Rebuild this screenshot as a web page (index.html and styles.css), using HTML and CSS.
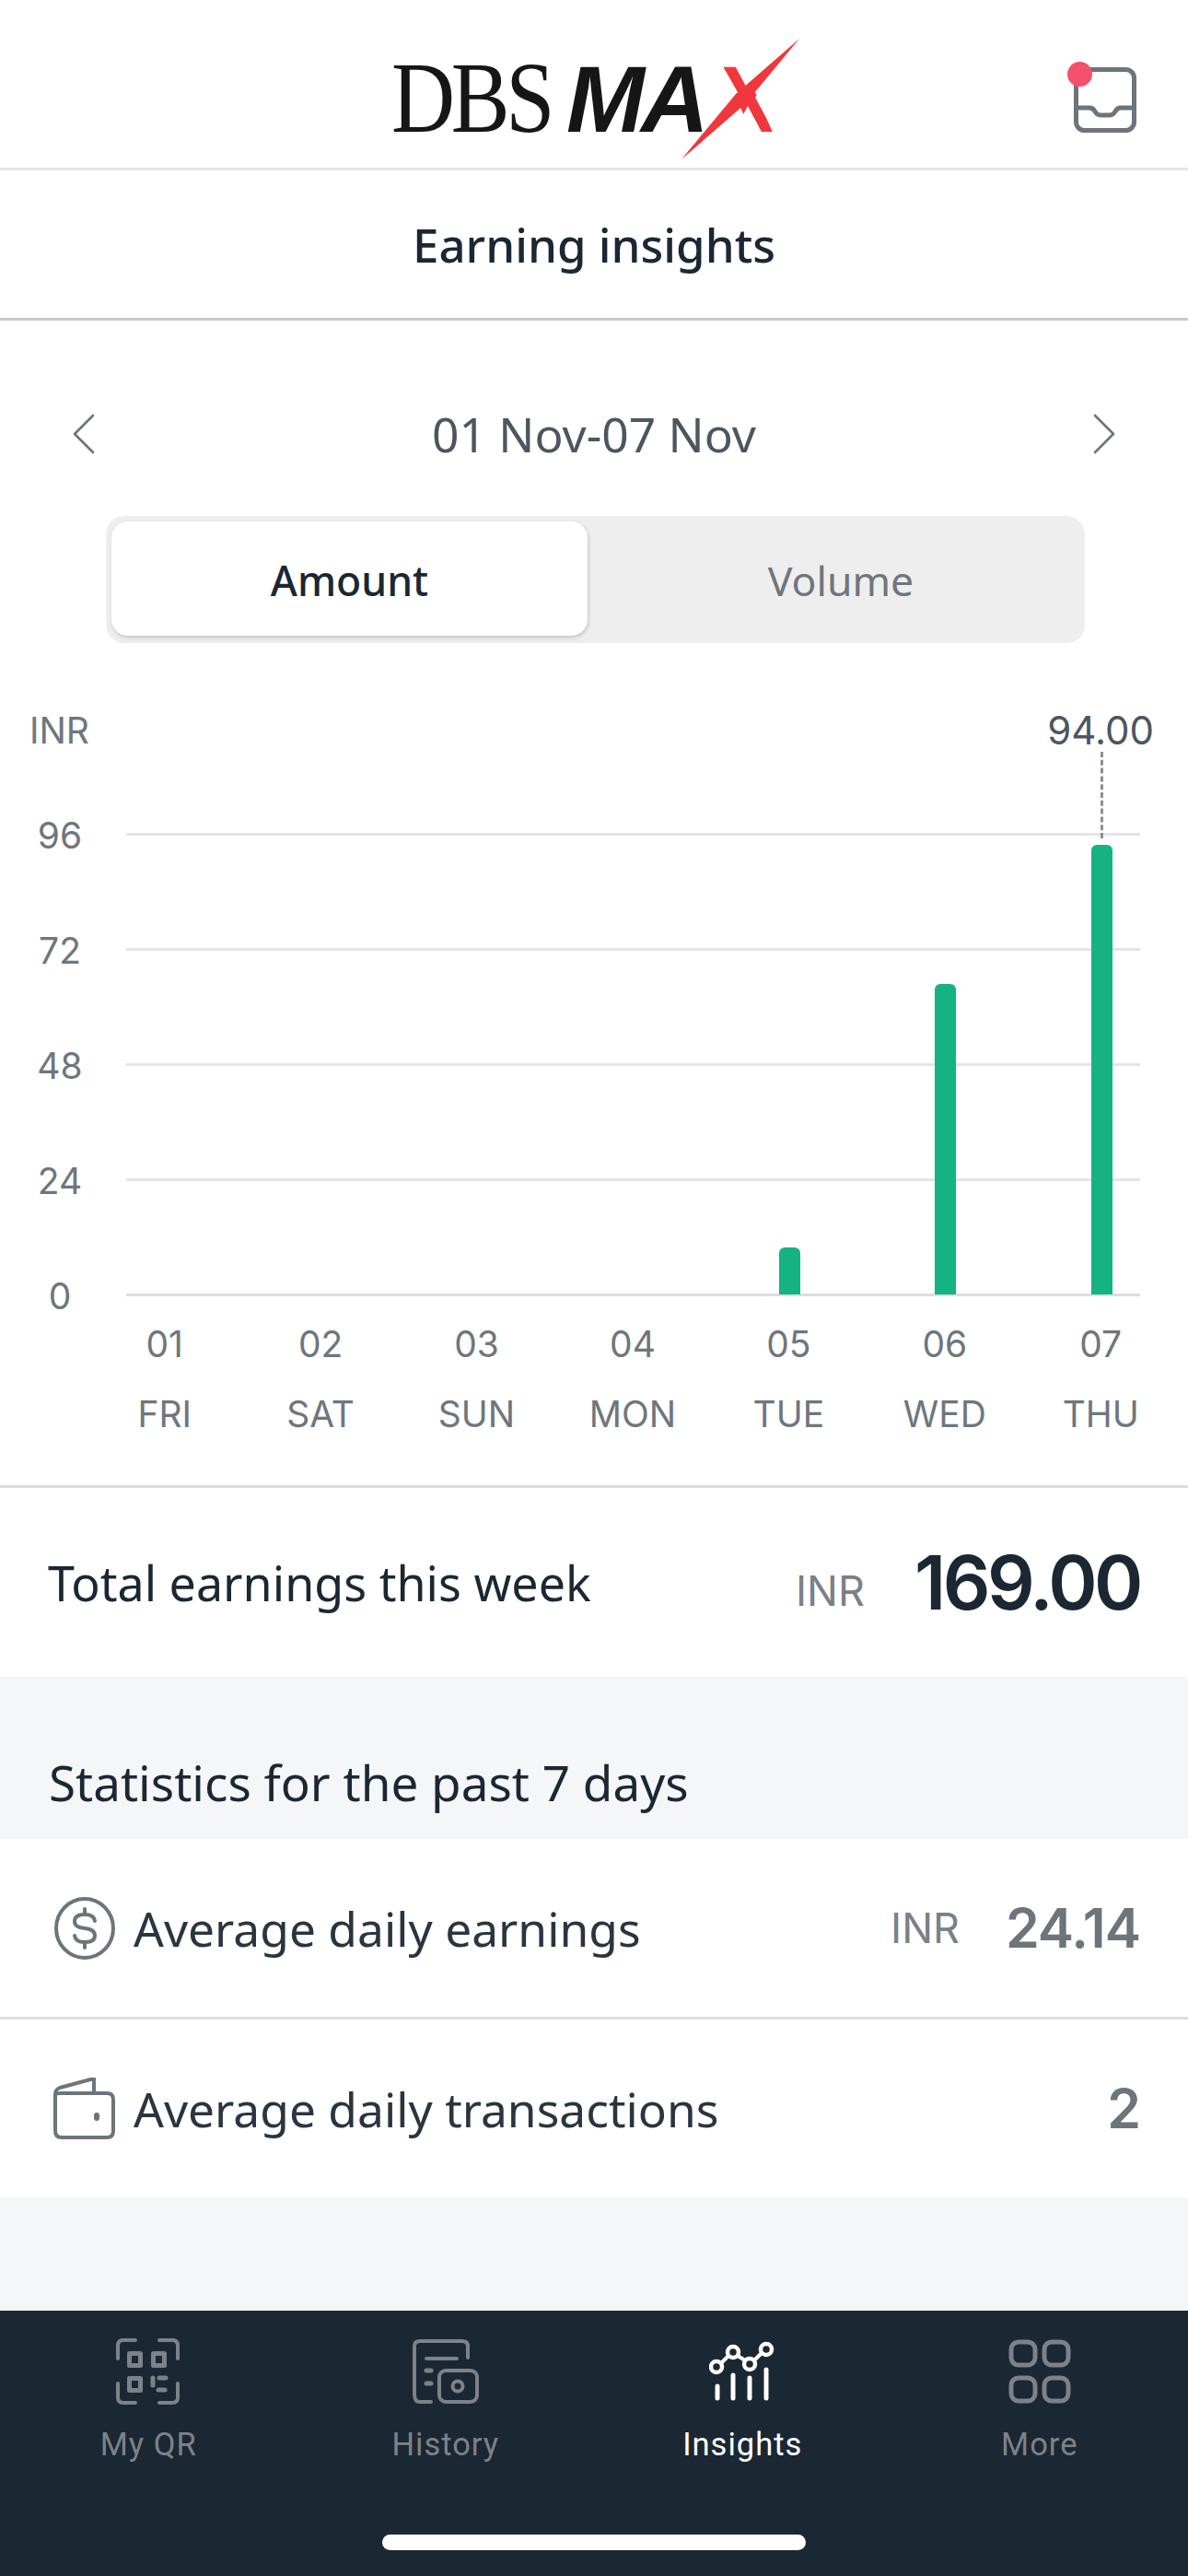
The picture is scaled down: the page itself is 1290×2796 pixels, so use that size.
FILE: index.html
```html
<!DOCTYPE html>
<html lang="en">

<head>
    <meta charset="UTF-8">
    <meta name="viewport" content="width=device-width, initial-scale=1.0">
    <title>Earning insights</title>
    <link rel="stylesheet" href="styles.css">
</head>

<body>
    <div class="app">
        <header class="topbar">
            <div class="logo">
                <span class="logo-dbs">DBS</span><span class="logo-ma">MA</span><span class="logo-x">X</span>
                <svg class="logo-slash" viewBox="0 0 128 131"><path d="M0 131 L59 60 L128 0 L69 71 Z" fill="#f0373c"/></svg>
            </div>
            <div class="inbox">
                <svg width="68" height="72" viewBox="0 0 68 72" fill="none" stroke="#6e747b" stroke-width="5" stroke-linecap="round" stroke-linejoin="round">
                    <rect x="2.500" y="2.500" width="63" height="66" rx="9"/>
                    <path d="M3 44 H17 Q21 44 23 48 Q25 52 29 52 H39 Q43 52 45 48 Q47 44 51 44 H65"/>
                </svg>
                <span class="inbox-dot"></span>
            </div>
        </header>

        <h1 class="page-title">Earning insights</h1>

        <section class="range">
            <svg width="26" height="44" viewBox="0 0 26 44" fill="none" stroke="#6e747b" stroke-width="2.600" stroke-linecap="round" stroke-linejoin="round"><path d="M23 2 L3 22 L23 42"/></svg>
            <span class="range-label">01 Nov-07 Nov</span>
            <svg width="26" height="44" viewBox="0 0 26 44" fill="none" stroke="#6e747b" stroke-width="2.600" stroke-linecap="round" stroke-linejoin="round"><path d="M3 2 L23 22 L3 42"/></svg>
        </section>

        <div class="toggle">
            <div class="toggle-item active">Amount</div>
            <div class="toggle-item">Volume</div>
        </div>

        <section class="chart">
            <div class="chart-head">
                <span>INR</span>
                <span class="peak">94.00</span>
            </div>
            <div class="plot">
                <div class="gridline"><span>96</span></div>
                <div class="gridline"><span>72</span></div>
                <div class="gridline"><span>48</span></div>
                <div class="gridline"><span>24</span></div>
                <div class="gridline last"><span>0</span></div>
                <div class="bars">
                    <div class="col"></div>
                    <div class="col"></div>
                    <div class="col"></div>
                    <div class="col"></div>
                    <div class="col"><div class="bar" style="height: 51px"></div></div>
                    <div class="col"><div class="bar" style="height: 337px"></div></div>
                    <div class="col"><div class="bar" style="height: 488px"></div></div>
                </div>
                <div class="peak-line"></div>
            </div>
            <div class="days">
                <div class="day"><span>01</span><span>FRI</span></div>
                <div class="day"><span>02</span><span>SAT</span></div>
                <div class="day"><span>03</span><span>SUN</span></div>
                <div class="day"><span>04</span><span>MON</span></div>
                <div class="day"><span>05</span><span>TUE</span></div>
                <div class="day"><span>06</span><span>WED</span></div>
                <div class="day"><span>07</span><span>THU</span></div>
            </div>
        </section>

        <section class="total">
            <span class="total-label">Total earnings this week</span>
            <span class="total-cur">INR</span>
            <span class="total-num">169.00</span>
        </section>

        <h2 class="stats-title">Statistics for the past 7 days</h2>

        <div class="stat stat-first">
            <svg class="stat-icon" width="68" height="68" viewBox="0 0 68 68" fill="none" stroke="#6e747b" stroke-width="4" stroke-linecap="round" stroke-linejoin="round">
                <ellipse cx="34" cy="34" rx="31" ry="32"/>
                <path d="M45 26 Q44 19 34 19 Q23 19 23 26.500 Q23 33 34 34 Q45 35 45 42 Q45 49 34 49 Q24 49 23 42"/>
                <path d="M34 13 V19 M34 49 V55"/>
            </svg>
            <span class="stat-label">Average daily earnings</span>
            <span class="stat-cur">INR</span>
            <span class="stat-num">24.14</span>
        </div>
        <div class="stat">
            <svg class="stat-icon" width="68" height="68" viewBox="0 0 68 68" fill="none" stroke="#6e747b" stroke-width="4" stroke-linecap="round" stroke-linejoin="round">
                <path d="M2 18 V58 Q2 65 9 65 H58 Q65 65 65 58 V24 Q65 17 58 17 H9 Q2 17 2 18 Q2 13 7 11 L44 1 V17"/>
                <path d="M47 41 V44" stroke-width="6"/>
            </svg>
            <span class="stat-label">Average daily transactions</span>
            <span class="stat-num">2</span>
        </div>

        <div class="spacer"></div>

        <nav class="tabbar">
            <div class="tabs">
                <div class="tab">
                    <svg width="70" height="72" viewBox="0 0 70 72" fill="none" stroke="currentColor" stroke-width="4" stroke-linecap="round" stroke-linejoin="round">
                        <path d="M2 22 V8 Q2 2 8 2 H21 M47 2 H61 Q67 2 67 8 V22 M2 49 V64 Q2 70 8 70 H21 M67 49 V64 Q67 70 61 70 H47"/>
                        <rect x="14.500" y="16.500" width="12" height="13" stroke-width="5"/>
                        <rect x="40.500" y="16.500" width="12" height="13" stroke-width="5"/>
                        <rect x="14.500" y="43.500" width="12" height="13" stroke-width="5"/>
                        <path d="M40 43 V51 M47 43 H54 M46 56 H53" stroke-width="5"/>
                    </svg>
                    <span>My QR</span>
                </div>
                <div class="tab">
                    <svg width="72" height="70" viewBox="0 0 72 70" fill="none" stroke="currentColor" stroke-width="4" stroke-linecap="round" stroke-linejoin="round">
                        <path d="M60 20 V8 Q60 2 54 2 H8 Q2 2 2 8 V60 Q2 68 8 68 H20"/>
                        <path d="M15 21 H48"/>
                        <path d="M15 34 H20 M15 48 H20" stroke-width="5"/>
                        <rect x="29" y="34" width="41" height="34" rx="7"/>
                        <circle cx="49" cy="51" r="5.500"/>
                    </svg>
                    <span>History</span>
                </div>
                <div class="tab active">
                    <svg width="72" height="66" viewBox="0 0 72 66" fill="none" stroke="currentColor" stroke-width="4" stroke-linecap="round" stroke-linejoin="round">
                        <circle cx="8" cy="28" r="6" stroke-width="4.500"/>
                        <circle cx="26" cy="12" r="6" stroke-width="4.500"/>
                        <circle cx="44" cy="25" r="6" stroke-width="4.500"/>
                        <circle cx="62" cy="9" r="6" stroke-width="4.500"/>
                        <path d="M13 24 L21 16 M31 16 L39 21 M49 21 L57 13"/>
                        <path d="M9 49 V62 M26 37 V62 M44 40 V62 M62 31 V62" stroke-width="5"/>
                    </svg>
                    <span>Insights</span>
                </div>
                <div class="tab">
                    <svg width="68" height="70" viewBox="0 0 68 70" fill="none" stroke="currentColor" stroke-width="5">
                        <rect x="3" y="3" width="26" height="25" rx="8"/>
                        <rect x="39" y="3" width="26" height="25" rx="8"/>
                        <rect x="3" y="42" width="26" height="25" rx="8"/>
                        <rect x="39" y="42" width="26" height="25" rx="8"/>
                    </svg>
                    <span>More</span>
                </div>
            </div>
            <div class="home-bar"></div>
        </nav>
    </div>
</body>

</html>
```

FILE: styles.css
```css
html {
    box-sizing: border-box;
    background: #fff;
    font-family: 'Noto Sans', sans-serif;
}

*,
*:before,
*:after {
    box-sizing: inherit;
}

body {
    margin: 0;
}

.app {
    width: 1290px;
    height: 2796px;
    display: flex;
    flex-direction: column;
    overflow: hidden;
    background: #fff;
    color: #1b2733;
}

/* top bar with logo */
.topbar {
    height: 185px;
    flex-shrink: 0;
    position: relative;
    display: flex;
    justify-content: center;
    align-items: center;
    border-bottom: 3px solid #e4e5e7;
}

.logo {
    position: relative;
    display: flex;
    align-items: baseline;
    width: 444px;
    height: 80px;
    line-height: 80px;
    color: #161616;
    margin-top: 30px;
    margin-left: 4px;
}

.logo-dbs {
    font-family: 'Liberation Serif', serif;
    font-size: 110px;
    letter-spacing: -5px;
    transform: scaleX(.87);
    transform-origin: left;
    width: 190px;
}

.logo-ma {
    font-family: 'Liberation Sans', sans-serif;
    font-weight: 700;
    font-style: italic;
    font-size: 102px;
    letter-spacing: -4px;
}

/* only the back stroke of the X shows, .logo-slash is the other one */
.logo-x {
    font-family: 'Liberation Sans', sans-serif;
    font-weight: 700;
    font-size: 102px;
    color: #f0373c;
    margin-left: 17px;
    transform: scaleX(.85);
    transform-origin: left;
    clip-path: polygon(0 0, 40% 0, 100% 100%, 60% 100%);
}

.logo-slash {
    position: absolute;
    left: 315px;
    top: -24px;
    width: 128px;
    height: 131px;
}

.inbox {
    position: absolute;
    right: 56px;
    top: 73px;
    width: 68px;
    height: 72px;
}

.inbox-dot {
    position: absolute;
    left: -7px;
    top: -6px;
    width: 27px;
    height: 27px;
    border-radius: 50%;
    background: #f5506e;
}

.page-title {
    margin: 0;
    height: 163px;
    flex-shrink: 0;
    display: flex;
    justify-content: center;
    align-items: center;
    font-size: 51px;
    font-weight: 500;
    border-bottom: 3px solid #c9cacc;
}

.range {
    height: 212px;
    flex-shrink: 0;
    padding: 33px 78px 0;
    display: flex;
    justify-content: space-between;
    align-items: center;
    color: #4d565f;
}

.range-label {
    font-size: 51.500px;
}

.toggle {
    width: 1063px;
    height: 138px;
    flex-shrink: 0;
    margin-left: 115px;
    padding: 6px 0 8px 6px;
    display: flex;
    background: #eeeeef;
    border-radius: 20px;
}

.toggle-item {
    flex: 1;
    display: flex;
    justify-content: center;
    align-items: center;
    font-size: 44.500px;
    color: #6f767d;
    padding-left: 10px;
    padding-top: 2px;
}

.toggle-item.active {
    flex: 0 0 517px;
    background: #fff;
    border-radius: 18px;
    color: #1b2733;
    font-weight: 500;
    box-shadow: 1px 2px 4px rgba(0, 0, 0, .18);
    padding-left: 0;
}

/* chart */
.chart {
    height: 917px;
    flex-shrink: 0;
    font-family: Inter, sans-serif;
    font-size: 39px;
    color: #6f767d;
    border-bottom: 3px solid #dcdde0;
}

.chart-head {
    height: 206px;
    padding: 71px 37px 0 32px;
    display: flex;
    justify-content: space-between;
    align-items: flex-start;
    line-height: 48px;
}

.peak {
    color: #4d565f;
    font-size: 42px;
}

.plot {
    position: relative;
    height: 500px;
    margin-left: 137px;
    margin-right: 52px;
}

.gridline {
    position: relative;
    height: 125px;
    border-top: 3px solid #e4e5e7;
}

.gridline.last {
    height: 0;
    border-top-color: #dcdde0;
}

.gridline span {
    position: absolute;
    left: -137px;
    top: -24px;
    width: 130px;
    text-align: center;
    line-height: 48px;
}

.bars {
    position: absolute;
    left: -42px;
    right: -43px;
    bottom: -1px;
    display: flex;
}

.col {
    flex: 1;
    height: 500px;
    display: flex;
    justify-content: center;
    align-items: flex-end;
}

.bar {
    width: 23px;
    background: #15b381;
    border-radius: 6px 6px 0 0;
}

.peak-line {
    position: absolute;
    right: 40px;
    top: -88px;
    height: 94px;
    border-left: 3px dashed #8a8f95;
}

.days {
    display: flex;
    margin: 31px 10px 0 94px;
    line-height: 48px;
}

.day {
    flex: 1;
    display: flex;
    flex-direction: column;
    align-items: center;
    gap: 28px;
}

/* total row */
.total {
    height: 205px;
    flex-shrink: 0;
    padding: 0 52px;
    display: flex;
    align-items: center;
}

.total-label {
    flex: 1;
    font-size: 52px;
}

.total-cur {
    font-family: Inter, sans-serif;
    font-size: 45px;
    color: #7a8087;
    margin-right: 54px;
    margin-top: 18px;
}

.total-num {
    font-family: Inter, sans-serif;
    font-size: 81px;
    font-weight: 600;
    letter-spacing: -3.500px;
}

.stats-title {
    margin: 0;
    height: 176px;
    flex-shrink: 0;
    padding: 83px 53px 0;
    font-size: 53px;
    font-weight: 400;
    line-height: 64px;
    background: #f5f6f8;
}

.stat {
    height: 193px;
    flex-shrink: 0;
    padding: 0 52px 0 58px;
    display: flex;
    align-items: center;
}

.stat-first {
    height: 196px;
    border-bottom: 3px solid #dcdde0;
}

.stat-icon {
    margin-right: 19px;
}

.stat-label {
    flex: 1;
    font-size: 51.500px;
    color: #2a3540;
}

.stat-cur {
    font-family: Inter, sans-serif;
    font-size: 45px;
    color: #7a8087;
    margin-right: 50px;
}

.stat-num {
    font-family: Inter, sans-serif;
    font-size: 59px;
    font-weight: 600;
    letter-spacing: -1px;
    color: #6d747b;
}

.spacer {
    flex: 1;
    background: #f5f6f8;
}

/* bottom nav */
.tabbar {
    height: 288px;
    flex-shrink: 0;
    background: #1b2733;
    display: flex;
    flex-direction: column;
    align-items: center;
}

.tabs {
    width: 100%;
    display: flex;
    padding-top: 30px;
}

.tab {
    flex: 1;
    display: flex;
    flex-direction: column;
    align-items: center;
    gap: 23px;
    color: #7d8288;
    font-family: Roboto, sans-serif;
    font-size: 34.500px;
    line-height: 40px;
    letter-spacing: 1px;
    height: 150px;
}

.tab svg {
    flex-shrink: 0;
    height: 72px;
}

.tab.active {
    color: #fff;
}

.home-bar {
    width: 460px;
    height: 17px;
    margin-top: 63px;
    background: #fff;
    border-radius: 9px;
}
```
